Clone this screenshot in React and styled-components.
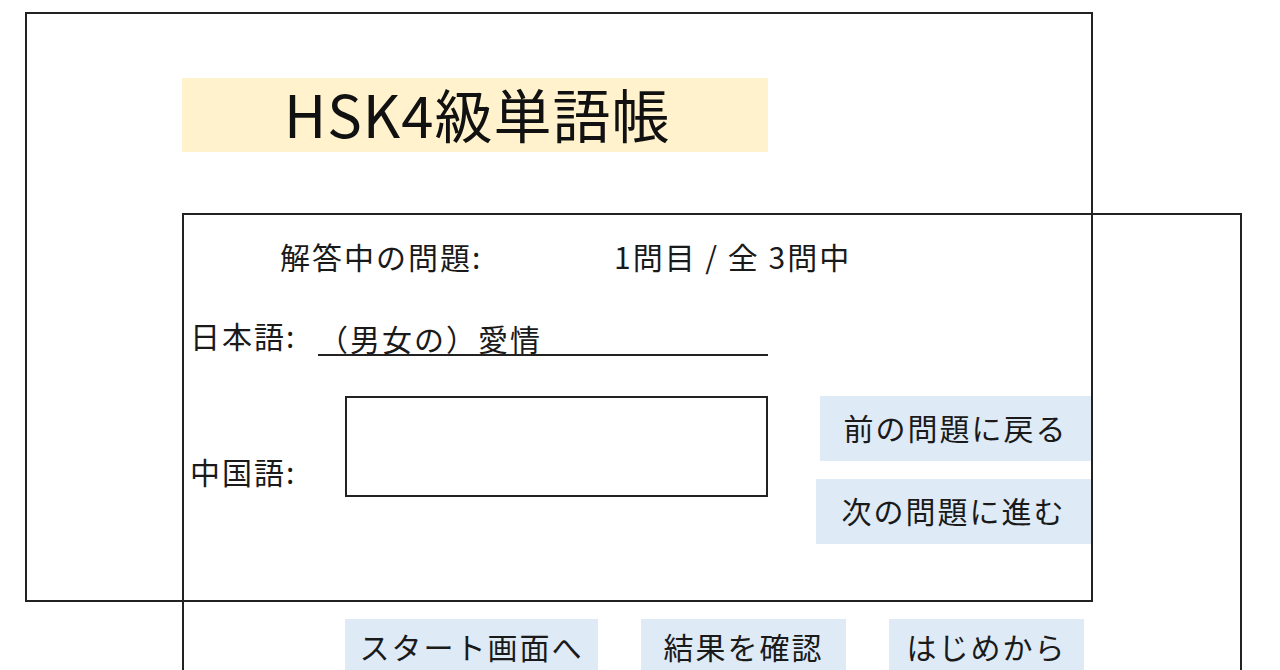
import styled, { createGlobalStyle } from 'styled-components'

const GlobalStyle = createGlobalStyle`
  html, body {
    margin: 0;
    padding: 0;
    background: #ffffff;
    overflow: hidden;
  }
  body {
    font-family: "Noto Sans CJK JP", "Liberation Sans", sans-serif;
    color: #1a1a1a;
  }
`

const Canvas = styled.div`
  position: relative;
  width: 1280px;
  height: 670px;
  overflow: hidden;
`

// the two wireframe windows overlap each other, so they sit on the canvas
const Frame = styled.div`
  position: absolute;
  box-sizing: border-box;
  border: 2px solid #222;
  left: ${p => p.left}px;
  top: ${p => p.top}px;
  width: ${p => p.width}px;
  height: ${p => p.height}px;
`

const TitleBar = styled.h1`
  display: flex;
  align-items: center;
  box-sizing: border-box;
  width: 586px;
  height: 74px;
  margin: 64px 0 0 155px;
  padding: 0 0 4px 102px;
  background-color: #fff2cc;
  font-size: 58px;
  font-weight: 400;
  letter-spacing: 1px;
  color: #111;
`

const Body = styled.div`
  display: flex;
  flex-direction: column;
  font-size: 30px;
  line-height: 36px;
  letter-spacing: 2px;
`

const StatusRow = styled.div`
  display: flex;
  margin-top: 23px;
  padding-left: 96px;
`

const StatusLabel = styled.span`
  width: 334px;
`

const FieldRow = styled.div`
  display: flex;
  align-items: ${p => (p.top ? 'flex-start' : 'flex-end')};
  margin-top: ${p => p.gap}px;
`

const Label = styled.span`
  box-sizing: border-box;
  width: ${p => p.width}px;
  padding-left: 6px;
  padding-top: ${p => p.offset || 0}px;
  padding-bottom: ${p => p.lift || 0}px;
`

const Answer = styled.div`
  width: 450px;
  line-height: 32px;
  border-bottom: 2px solid #222;
`

const AnswerInput = styled.input`
  box-sizing: border-box;
  width: 423px;
  height: 101px;
  margin: 0;
  padding: 0 10px;
  border: 2px solid #222;
  outline: none;
  font: inherit;
  background: #fff;
`

const NavColumn = styled.div`
  display: flex;
  flex-direction: column;
  align-items: flex-end;
  gap: 18px;
  width: 323px;
`

const Button = styled.button`
  box-sizing: border-box;
  width: ${p => p.width}px;
  height: ${p => p.height || 65}px;
  margin: 0;
  padding: 0 0 ${p => p.lift || 4}px;
  border: none;
  background-color: #deeaf6;
  font-family: inherit;
  font-size: 30px;
  line-height: 36px;
  letter-spacing: 2px;
  color: #1a1a1a;
  cursor: pointer;
`

const FooterRow = styled.div`
  display: flex;
  gap: 43px;
  margin-top: 75px;
  padding-left: 161px;
`

export default function App() {
  return (
    <>
      <GlobalStyle />
      <Canvas>
        <Frame left={25} top={12} width={1068} height={590}>
          <TitleBar>HSK4級単語帳</TitleBar>
        </Frame>
        <Frame left={182} top={213} width={1060} height={520}>
          <Body>
            <StatusRow>
              <StatusLabel>解答中の問題:</StatusLabel>
              <span>1問目 / 全 3問中</span>
            </StatusRow>
            <FieldRow gap={43}>
              <Label width={134} lift={3}>日本語:</Label>
              <Answer>（男女の）愛情</Answer>
            </FieldRow>
            <FieldRow gap={40} top>
              <Label width={161} offset={57}>中国語:</Label>
              <AnswerInput type="text" />
              <NavColumn>
                <Button width={271}>前の問題に戻る</Button>
                <Button width={275}>次の問題に進む</Button>
              </NavColumn>
            </FieldRow>
            <FooterRow>
              <Button width={253} height={66} lift={12}>スタート画面へ</Button>
              <Button width={205} height={66} lift={12}>結果を確認</Button>
              <Button width={195} height={66} lift={12}>はじめから</Button>
            </FooterRow>
          </Body>
        </Frame>
      </Canvas>
    </>
  )
}
